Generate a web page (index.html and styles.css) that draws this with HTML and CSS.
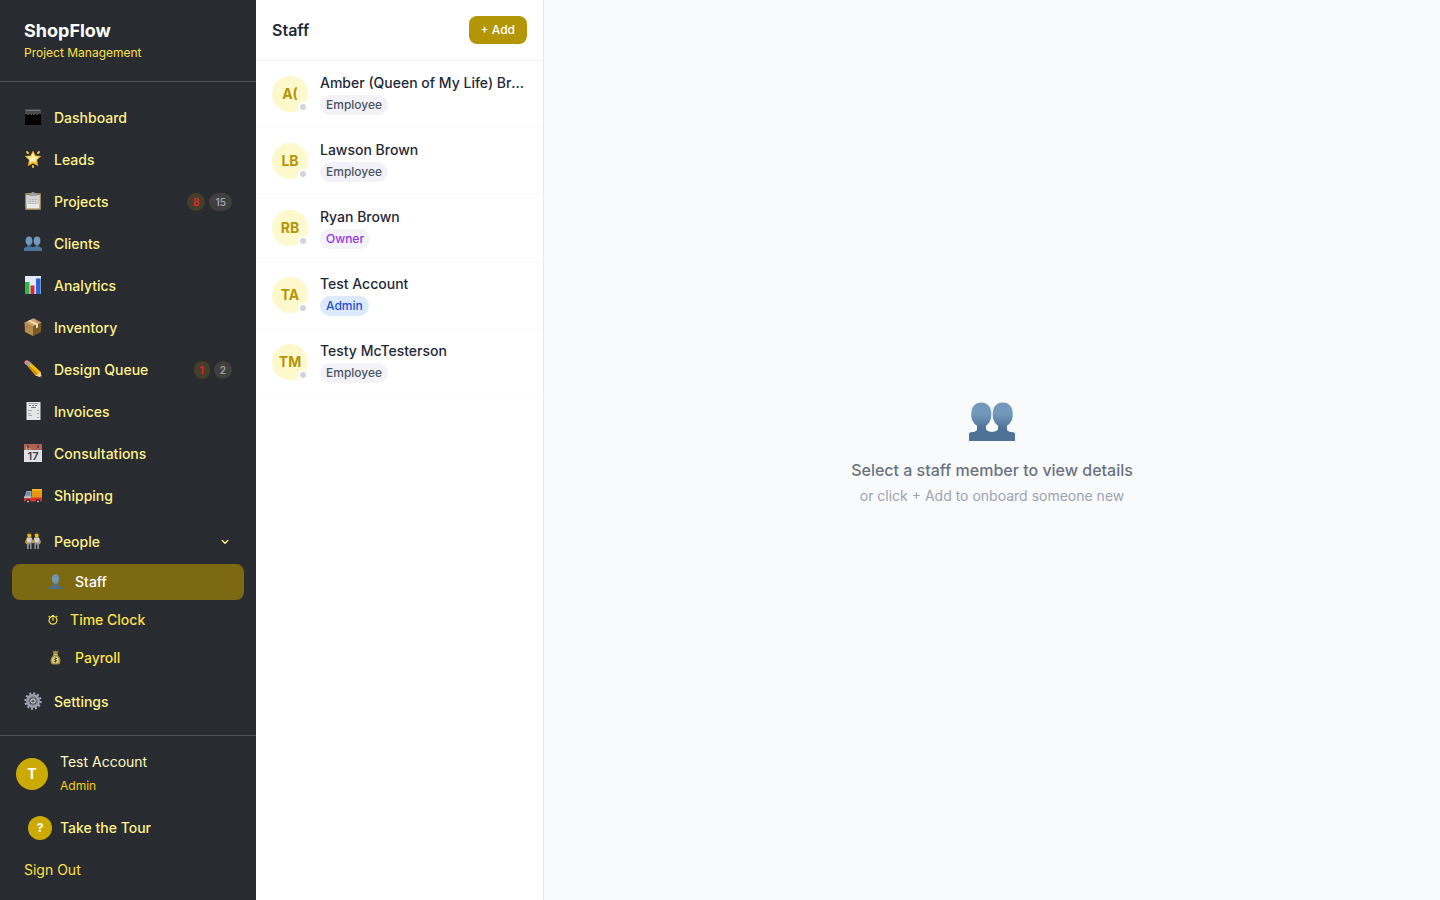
FILE: index.html
```html
<!DOCTYPE html>
<html lang="en">
<head>
    <meta charset="UTF-8">
    <meta name="viewport" content="width=device-width, initial-scale=1.0">
    <title>ShopFlow - Staff</title>
    <link rel="stylesheet" href="styles.css">
</head>
<body>
    <div class="app">
        <aside class="sidebar">
            <div class="brand">
                <h1>ShopFlow</h1>
                <p>Project Management</p>
            </div>

            <nav class="nav">
                <a href="#" class="nav-item">
                    <svg class="icon" viewBox="0 0 18 18"><path fill="#47494c" d="M1 1h16v6H1z"/><path fill="#77797c" d="M2 2h14v1H2z"/><path fill="#020202" d="M1 6h2v1h2V6h1v1h2V6h1v1h2V6h1v1h2V6h3v11H1z"/></svg>
                    <span>Dashboard</span>
                </a>
                <a href="#" class="nav-item">
                    <svg class="icon" viewBox="0 0 18 18"><path fill="#f8b91c" d="M9 .5l2.500 5 5.700.6-4.200 4 1.200 6L9 13.500l-5.200 2.600 1.200-6-4.200-4 5.700-.6z"/><path fill="#ffefb0" d="M9 2.500l1.700 4 4.300.6-3.200 2.900.5 3L9 11.500l-3.300 1.500.5-3L3 7.100l4.300-.6z"/><path stroke="#eac33c" stroke-width="2" stroke-linecap="round" d="M3 2l1 1M15 2l-1 1M9 16v1"/></svg>
                    <span>Leads</span>
                </a>
                <a href="#" class="nav-item">
                    <svg class="icon" viewBox="0 0 18 18"><rect x="1" y="1" width="16" height="17" rx="1" fill="#958750"/><path fill="#e9e9ec" d="M2.500 3h13v13.500h-13z"/><path fill="#d2d2d7" d="M2.500 3h13v9h-13z"/><path fill="#9b9fa6" d="M5 1.500h2Q7 0 9 0t2 1.500h2V4H5z"/><path stroke="#b5b7be" d="M5 7.500h8M5 9.500h7M5 11.500h8" stroke-dasharray="2 1"/></svg>
                    <span>Projects</span>
                    <span class="counts"><b class="count count-alert">8</b><b class="count">15</b></span>
                </a>
                <a href="#" class="nav-item">
                    <svg class="icon" viewBox="0 0 18 18"><path fill="#4d7499" d="M0 17v-2.500q0-1 1.500-1.300l2-.7v-3h3v3l2.500.6 2.500-.6v-3h3v3l2 .7q1.500.3 1.500 1.300V17z"/><ellipse cx="5" cy="6.800" rx="3.400" ry="4.300" fill="#7199bc"/><ellipse cx="13" cy="6.800" rx="3.400" ry="4.300" fill="#7199bc"/></svg>
                    <span>Clients</span>
                </a>
                <a href="#" class="nav-item">
                    <svg class="icon" viewBox="0 0 18 18"><path fill="#e3eaf3" d="M1 0h16v18H1z"/><path fill="#2eb743" d="M1 6h4.500v12H1z"/><path fill="#d52c35" d="M6.500 9.500h4V18h-4z"/><path fill="#2d61d5" d="M12 2.500h4V18h-4z"/><path fill="#7595d4" d="M16 2.500h1V18h-1z"/></svg>
                    <span>Analytics</span>
                </a>
                <a href="#" class="nav-item">
                    <svg class="icon" viewBox="0 0 18 18"><path fill="#b68b4d" d="M.5 4.500L9 7.500V18L1 14z"/><path fill="#785a24" d="M9 7.500l8.500-3-.5 9.500-8 4z"/><path fill="#cda66c" d="M.5 4.500L9.500.3l8 4.200L9 8.200z"/><path fill="#f0dfb9" d="M4 3l2-1 8 4v3.500l-2 .8V7.200z"/><path stroke="#d5574e" d="M3 8v2M12.500 2.500l2 1"/></svg>
                    <span>Inventory</span>
                </a>
                <a href="#" class="nav-item">
                    <svg class="icon" viewBox="0 0 18 18"><path fill="#f5bb08" d="M3.800 6.200l3-3.500 9.500 8.800 1.400 6-6.200-2z"/><path fill="#d18e06" d="M3.800 6.200l1-1.200 9 8.500-2.300 2z"/><path fill="#7fb3d6" d="M2.600 5l3-3.500 1.500 1.300-3 3.700z"/><path fill="#e9827b" d="M2.700 5.200L.5 3.500Q0 2 1 1t2.500-.7L5.700 1.700z"/><path fill="#efd5a3" d="M13.600 14.500l3-2.500 1.200 5.500-6.200-2z"/><path fill="#3b3430" d="M15.800 17l1.500-1.500.7 2.500z"/></svg>
                    <span>Design Queue</span>
                    <span class="counts"><b class="count count-alert">1</b><b class="count">2</b></span>
                </a>
                <a href="#" class="nav-item">
                    <svg class="icon" viewBox="0 0 18 18"><path fill="#e4e6e8" d="M2.500 0h14v18h-14z"/><path stroke="#a3a7ab" d="M4.500 1.500h10"/><path stroke="#777b80" d="M5 3.500h9" stroke-dasharray="2 1"/><path stroke="#777b80" d="M7 5.500h5"/><path stroke="#a7aaae" d="M4 8.500h4M13 8.500h2M4 11.500h3M13 11.500h2M4 13.500h4M13 15.500h2"/></svg>
                    <span>Invoices</span>
                </a>
                <a href="#" class="nav-item">
                    <svg class="icon" viewBox="0 0 18 18"><path fill="#dfe1e5" d="M0 0h18v18H0z"/><path fill="#b56057" d="M0 0h18v6H0z"/><path stroke="#554036" stroke-width="1.500" d="M4 1v3M14 1v3"/><path stroke="#c2b68f" d="M2.500 3v3M6 4v2"/><text class="day" x="9" y="16" text-anchor="middle">17</text></svg>
                    <span>Consultations</span>
                </a>
                <a href="#" class="nav-item">
                    <svg class="icon" viewBox="0 0 18 18"><path fill="#e6960f" d="M8 3h10v9H8z"/><path fill="#ffbe24" d="M8 3h10v1.500H8z"/><path fill="#9baab7" d="M2.500 5H7.500v6H.5z"/><path fill="#5e91b8" d="M3.200 6h3v3.500H1.800z"/><path fill="#b9c4cc" d="M0 10.500h7.500v2H0z"/><path fill="#df3129" d="M0 12.300h8v-.8h10v4H0z"/><circle cx="4" cy="15.500" r="2.300" fill="#24282c"/><circle cx="14" cy="15.500" r="2.300" fill="#24282c"/><circle cx="4" cy="15.500" r="1.100" fill="#a5adb3"/><circle cx="14" cy="15.500" r="1.100" fill="#a5adb3"/></svg>
                    <span>Shipping</span>
                </a>

                <div class="nav-group">
                    <button type="button" class="nav-item" aria-expanded="true">
                        <svg class="icon" viewBox="0 0 18 18"><path fill="none" stroke="#d2a325" stroke-width="1.500" stroke-linecap="round" stroke-linejoin="round" d="M3.200 6.500L1.800 10l1 1.500M7.200 6.500L9 10.800l1.800-4.300M14.800 6.500l1.400 3.500-1 1.500"/><path fill="#cbd2dc" d="M3 5.500h4.600V11H3zM10.400 5.500H15V11h-4.600z"/><path fill="#8b8f96" d="M3 10.500h4.600V17H6v-4.500h-1.200V17H3zM10.400 10.500H15V17h-1.800v-4.500H12V17h-1.600z"/><path fill="#eab922" d="M3.400 2h3.800v2.500l-1.900 1.500-1.900-1.500zM10.800 2h3.800v2.500l-1.900 1.500-1.900-1.500z"/><path fill="#6f581f" d="M3.200 2.500q.2-2 2.100-2t2.100 2l-2.100-1zM10.600 2.500q.2-2 2.100-2t2.100 2l-2.100-1z"/></svg>
                        <span>People</span>
                        <svg class="chevron" viewBox="0 0 8 8"><path fill="none" stroke="currentColor" stroke-width="1.500" stroke-linecap="round" stroke-linejoin="round" d="M1.200 2.500L4 5.200l2.800-2.700"/></svg>
                    </button>
                    <a href="#" class="nav-item nav-sub active">
                        <svg class="icon" viewBox="0 0 15 16"><path fill="#4c6e8f" d="M0 15q0-2 2.500-2.500L6 11.300V9h3v2.300l3.500 1.200Q15 13 15 15z"/><ellipse cx="7.500" cy="5" rx="3.700" ry="4.800" fill="#7397b3"/></svg>
                        <span>Staff</span>
                    </a>
                    <a href="#" class="nav-item nav-sub">
                        <svg class="icon icon-small" viewBox="0 0 10 10"><g fill="none" stroke="currentColor"><circle cx="5" cy="5.300" r="3.900" stroke-width="1.200"/><path stroke-width="1.200" d="M5 2.500v3.300M4 .7h2M8.300 1l1 1M1.700 1l-1 1"/></g></svg>
                        <span>Time Clock</span>
                    </a>
                    <a href="#" class="nav-item nav-sub">
                        <svg class="icon" viewBox="0 0 15 16"><path fill="#a78f36" d="M4.500.5l2 1 1-1 1 1 2-1L9.300 4.500q3.200 3 3.200 6.500 0 3.500-3 3.500h-4q-3 0-3-3.500 0-3.500 3.200-6.500z"/><path fill="#d8c46a" d="M5.500 4h4v1h-4z"/><circle cx="7.500" cy="10" r="3.500" fill="#d7c98d"/><path fill="none" stroke="#57502e" d="M9 8.500H7q-1 .7 0 1.500h1q1 .8 0 1.600H6M7.500 7.500v5"/></svg>
                        <span>Payroll</span>
                    </a>
                </div>

                <a href="#" class="nav-item">
                    <svg class="icon" viewBox="0 0 18 18"><circle cx="9" cy="9" r="7.700" fill="none" stroke="#a5adb9" stroke-width="2" stroke-dasharray="2 2.030"/><circle cx="9" cy="9" r="5.300" fill="none" stroke="#979fab" stroke-width="3.400"/><circle cx="9" cy="9" r="4.200" fill="none" stroke="#6d747e" stroke-width=".8"/><circle cx="9" cy="9" r="2.200" fill="#54585f" stroke="#c3c9d1" stroke-width="1.200"/></svg>
                    <span>Settings</span>
                </a>
            </nav>

            <div class="account">
                <div class="user">
                    <div class="user-avatar">T</div>
                    <div>
                        <p class="user-name">Test Account</p>
                        <p class="user-role">Admin</p>
                    </div>
                </div>
                <button type="button" class="tour"><span class="tour-mark">?</span>Take the Tour</button>
                <button type="button" class="sign-out">Sign Out</button>
            </div>
        </aside>

        <section class="staff">
            <header class="staff-header">
                <h2>Staff</h2>
                <button type="button" class="add-button">+ Add</button>
            </header>
            <ul class="staff-list">
                <li><button type="button" class="member">
                    <span class="avatar">A(<i class="status"></i></span>
                    <span class="member-info"><span class="member-name">Amber (Queen of My Life) Brown</span><span class="role">Employee</span></span>
                </button></li>
                <li><button type="button" class="member">
                    <span class="avatar">LB<i class="status"></i></span>
                    <span class="member-info"><span class="member-name">Lawson Brown</span><span class="role">Employee</span></span>
                </button></li>
                <li><button type="button" class="member">
                    <span class="avatar">RB<i class="status"></i></span>
                    <span class="member-info"><span class="member-name">Ryan Brown</span><span class="role role-owner">Owner</span></span>
                </button></li>
                <li><button type="button" class="member">
                    <span class="avatar">TA<i class="status"></i></span>
                    <span class="member-info"><span class="member-name">Test Account</span><span class="role role-admin">Admin</span></span>
                </button></li>
                <li><button type="button" class="member">
                    <span class="avatar">TM<i class="status"></i></span>
                    <span class="member-info"><span class="member-name">Testy McTesterson</span><span class="role">Employee</span></span>
                </button></li>
            </ul>
        </section>

        <main class="details">
            <svg class="empty-icon" viewBox="0 0 48 48">
                <defs>
                    <linearGradient id="bust" x1="0" y1="8" x2="0" y2="46" gradientUnits="userSpaceOnUse">
                        <stop offset="0.3" stop-color="#739abd"/>
                        <stop offset="0.7" stop-color="#4d7296"/>
                    </linearGradient>
                </defs>
                <path fill="url(#bust)" d="M1 47v-7q0-1.500 2-1.700 6-.3 6-3v-3.500Q3.500 28 3.300 22 2.500 9 13.300 8.500 24 9 23.300 22q-.3 6-5.300 9.800v3q0 2.500 6 3.200 6-.7 6-3.200v-3q-5-3.800-5.300-9.800Q24 9 34.700 8.500 45.500 9 44.700 22q-.2 6-5.700 9.800v3.500q0 2.700 6 3 2 .2 2 1.700v7z"/>
            </svg>
            <p class="empty-title">Select a staff member to view details</p>
            <p class="empty-hint">or click + Add to onboard someone new</p>
        </main>
    </div>
</body>
</html>
```
FILE: styles.css
```css
:root {
    --sidebar-bg: #282c30;
    --sidebar-line: #4f5358;
    --yellow-light: #fef08a;
    --yellow: #fde047;
    --gold: #ccaa04;
    --text-color: #1f2937;
}

* {
    box-sizing: border-box;
}

body {
    margin: 0;
    font-family: Inter, "Liberation Sans", sans-serif;
    font-size: 14px;
    line-height: 20px;
    color: var(--text-color);
}

h1, h2, p, ul {
    margin: 0;
    padding: 0;
}

button {
    border: none;
    background: none;
    font: inherit;
    color: inherit;
    text-align: left;
    cursor: pointer;
}

.app {
    display: flex;
    height: 100vh;
}

/* Sidebar */
.sidebar {
    display: flex;
    flex-direction: column;
    flex: none;
    width: 256px;
    background: var(--sidebar-bg);
    color: var(--yellow-light);
}

.brand {
    padding: 20px 24px;
    border-bottom: 1px solid var(--sidebar-line);
}

.brand h1 {
    margin-bottom: 2px;
    font-size: 18px;
    line-height: 22px;
    font-weight: 700;
    color: #fff;
}

.brand p {
    font-size: 12px;
    line-height: 17px;
    color: var(--yellow);
}

.nav {
    display: flex;
    flex-direction: column;
    flex: 1;
    gap: 2px;
    min-height: 0;
    padding: 16px 12px 0;
    overflow: hidden;
}

.nav-item {
    display: flex;
    align-items: center;
    gap: 12px;
    flex: none;
    height: 40px;
    padding: 0 12px;
    border-radius: 8px;
    font-weight: 500;
    color: var(--yellow-light);
    text-decoration: none;
}

.nav-group {
    display: flex;
    flex-direction: column;
    gap: 2px;
    margin: 4px 0;
}

.nav-sub {
    height: 36px;
    padding-left: 36px;
    color: var(--yellow);
}

.nav-sub.active {
    background: #7d6912;
    color: #fff;
}

.icon {
    flex: none;
    width: 18px;
    height: 18px;
    margin-bottom: 2px;
}

.nav-sub .icon {
    width: 15px;
    height: 16px;
    margin-bottom: 0;
}

.nav-sub .icon-small {
    width: 10px;
    height: 10px;
}

.day {
    font-size: 11px;
    font-weight: 600;
    fill: #3d4650;
}

.counts {
    display: flex;
    gap: 4px;
    margin-left: auto;
}

.count {
    min-width: 16px;
    padding: 0 6px;
    border-radius: 9px;
    background: #413f3d;
    font-size: 10px;
    line-height: 18px;
    font-weight: 600;
    color: #9ca3af;
    text-align: center;
}

.count-alert {
    background: #463d2a;
    color: #e5282a;
}

.chevron {
    width: 8px;
    height: 8px;
    margin: 0 3px 0 auto;
}

.account {
    display: flex;
    flex-direction: column;
    padding: 16px 16px 10px;
    border-top: 1px solid var(--sidebar-line);
}

.user {
    display: flex;
    align-items: center;
    gap: 12px;
    margin-bottom: 12px;
}

.user-avatar,
.tour-mark {
    display: flex;
    align-items: center;
    justify-content: center;
    border-radius: 50%;
    background: var(--gold);
    font-weight: 700;
    color: #fff;
}

.user-avatar {
    width: 32px;
    height: 32px;
}

.user-name {
    margin-bottom: 4px;
    color: #fef9c3;
}

.user-role {
    font-size: 12px;
    color: #facc15;
}

.tour {
    display: flex;
    align-items: center;
    gap: 8px;
    height: 40px;
    margin-bottom: 2px;
    padding: 0 12px;
    font-weight: 500;
}

.tour-mark {
    width: 24px;
    height: 24px;
    font-size: 12px;
}

.sign-out {
    height: 40px;
    padding: 0 8px;
    color: var(--yellow);
}

/* Staff list */
.staff {
    flex: none;
    width: 288px;
    border-right: 1px solid #e5e7eb;
    background: #fff;
    overflow-y: auto;
}

.staff-header {
    display: flex;
    align-items: center;
    justify-content: space-between;
    padding: 16px;
    border-bottom: 1px solid #f3f4f6;
}

.staff-header h2 {
    font-size: 16px;
    line-height: 24px;
    font-weight: 600;
}

.add-button {
    padding: 4px 12px;
    border-radius: 8px;
    background: #b39605;
    font-size: 12px;
    font-weight: 500;
    color: #fff;
}

.staff-list {
    list-style: none;
}

.member {
    display: flex;
    align-items: center;
    gap: 12px;
    width: 100%;
    padding: 12px 16px;
    border-bottom: 1px solid #f9fafb;
}

.avatar {
    position: relative;
    display: flex;
    align-items: center;
    justify-content: center;
    flex: none;
    width: 36px;
    height: 36px;
    border-radius: 50%;
    background: #fef9cc;
    font-weight: 700;
    color: #b39605;
}

.status {
    position: absolute;
    right: 0;
    bottom: 0;
    width: 10px;
    height: 10px;
    border: 2px solid #fff;
    border-radius: 50%;
    background: #d1d5db;
}

.member-info {
    display: flex;
    flex-direction: column;
    align-items: flex-start;
    gap: 2px;
    min-width: 0;
}

.member-name {
    max-width: 100%;
    font-weight: 500;
    white-space: nowrap;
    overflow: hidden;
    text-overflow: ellipsis;
}

.role {
    padding: 0 6px;
    border-radius: 10px;
    background: #f3f2f8;
    font-size: 12px;
    font-weight: 500;
    color: #4b5563;
}

.role-owner {
    color: #9333ea;
}

.role-admin {
    background: #dbeafe;
    color: #1d4ed8;
}

/* Empty state */
.details {
    display: flex;
    flex-direction: column;
    align-items: center;
    justify-content: center;
    flex: 1;
    background: #f9fafc;
}

.empty-icon {
    width: 48px;
    height: 48px;
    margin-bottom: 16px;
}

.empty-title {
    margin-bottom: 4px;
    font-size: 16px;
    line-height: 24px;
    font-weight: 500;
    color: #6b7280;
}

.empty-hint {
    color: #9ca3af;
}
```
